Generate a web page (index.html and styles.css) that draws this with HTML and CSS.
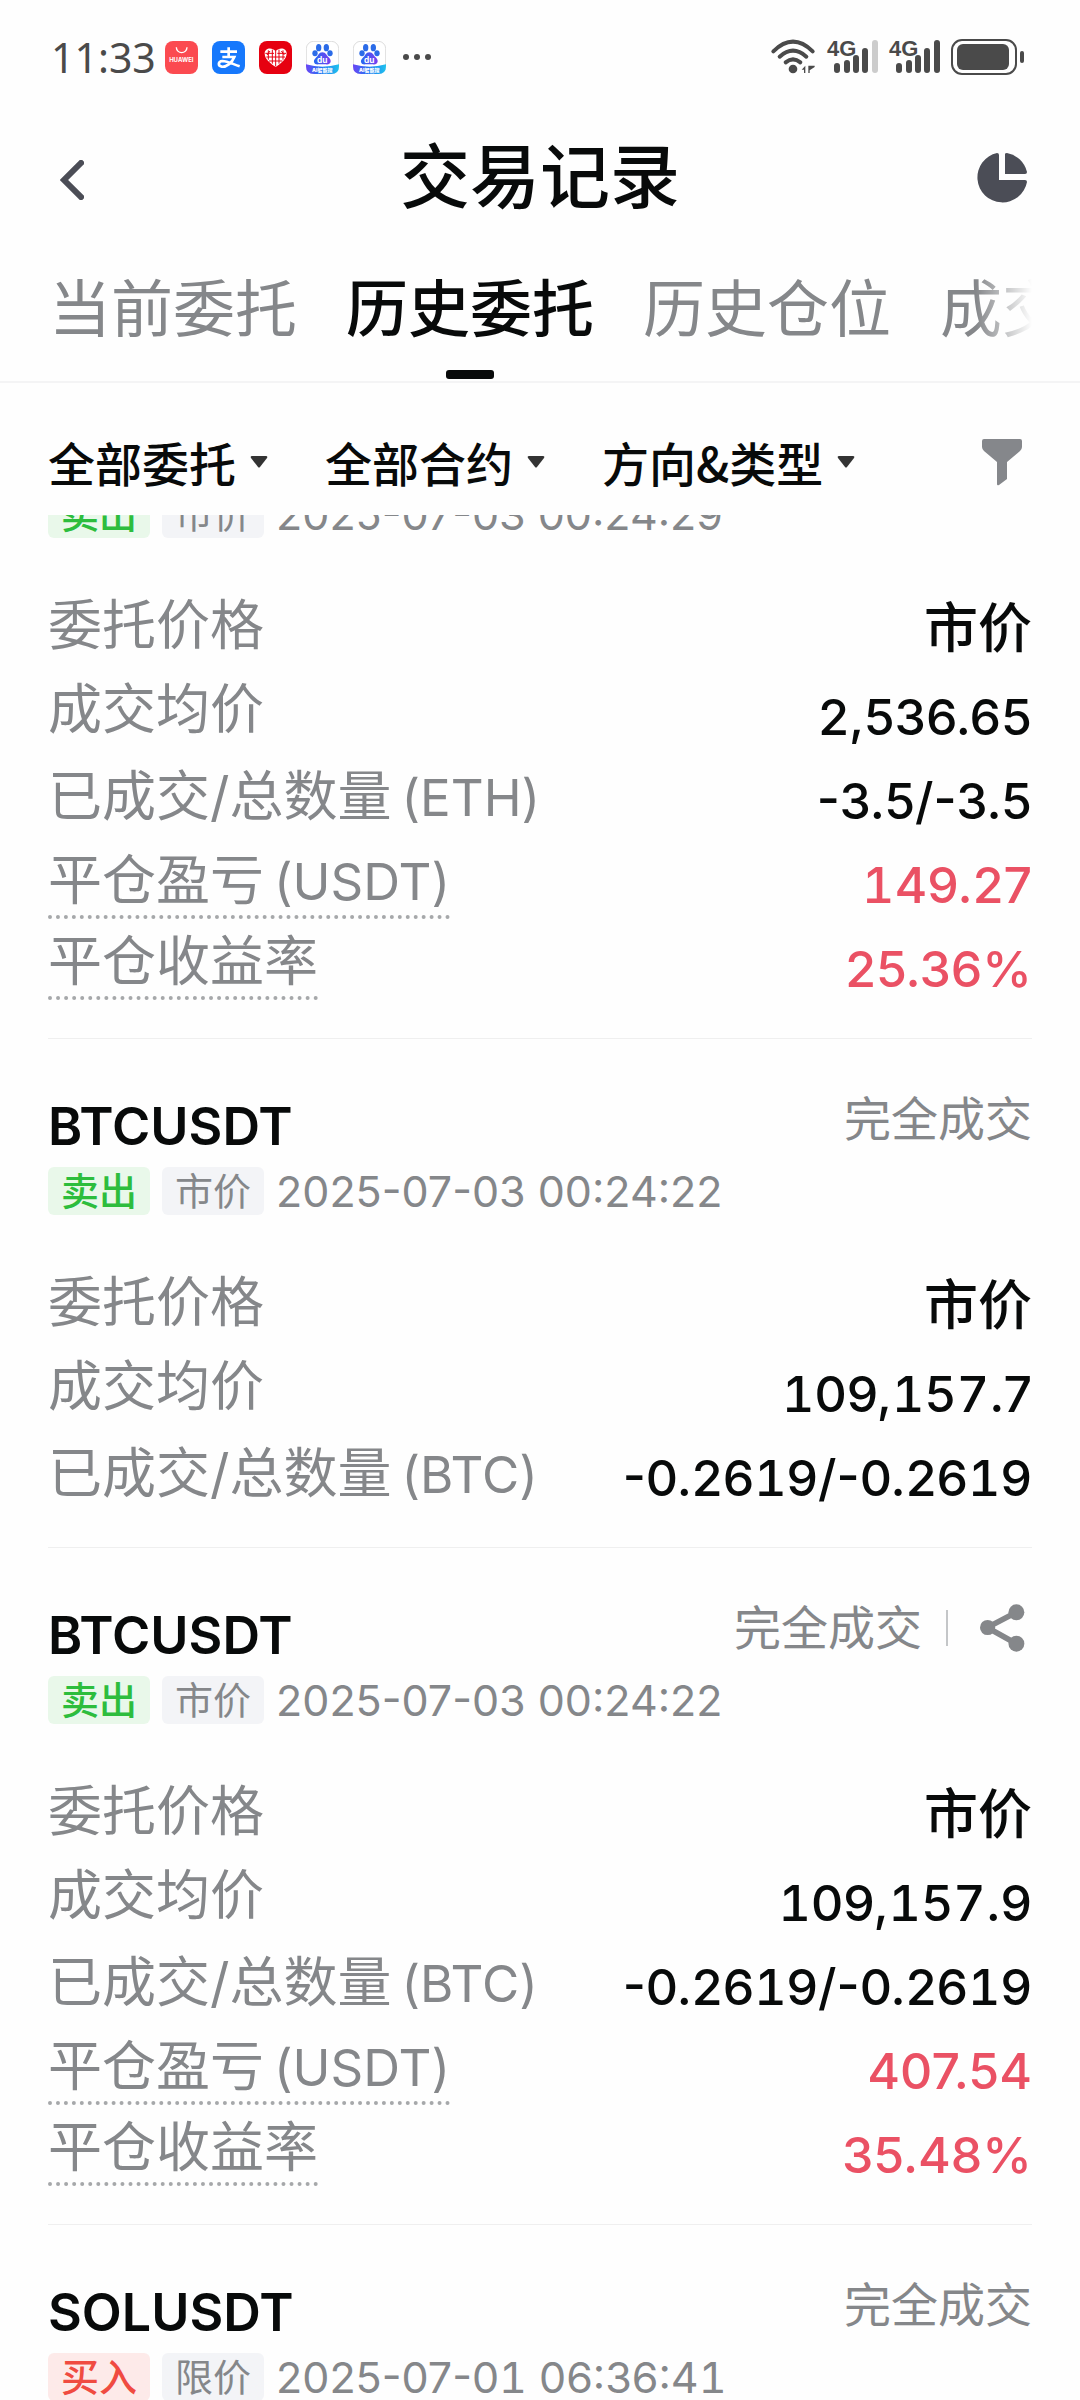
FILE: index.html
```html
<!DOCTYPE html>
<html lang="zh-CN">
<head>
<meta charset="utf-8">
<meta name="viewport" content="width=device-width">
<title>交易记录</title>
<link rel="stylesheet" href="styles.css">
</head>
<body>
<div class="statusbar">
  <span class="clock">11:33</span>
  <div class="apps">
    <svg class="app" viewBox="0 0 99 99"><rect width="99" height="99" rx="24" fill="#fb4a50"/><path d="M34 19a16 16 0 0 0 32 0" fill="none" stroke="#fff" stroke-width="4"/><text x="49" y="64" font-size="18" font-weight="700" text-anchor="middle" fill="#fff">HUAWEI</text></svg>
    <svg class="app" viewBox="0 0 99 99"><rect width="99" height="99" rx="24" fill="#1678fc"/><path d="M25 32H75M50 19V48M31 48H67C60 66 42 79 29 77C17 75 18 61 31 60C48 60 63 70 83 76" fill="none" stroke="#fff" stroke-width="8"/></svg>
    <svg class="app" viewBox="0 0 99 99"><rect width="99" height="99" rx="24" fill="#e60010"/><path d="M50 78C32 66 17 54 17 37C17 22 38 17 50 31C62 17 83 22 83 37C83 54 68 66 50 78Z" fill="#fff"/><path d="M50 30V76M40 26V68M60 26V68M28 28V56M72 28V56M19 37H45M55 37H81M22 48H78M30 60H70M33 30L24 42M67 30L76 42" stroke="#e60010" stroke-width="3" fill="none"/></svg>
    <svg class="app" viewBox="0 0 99 99"><use href="#baidu"/></svg>
    <svg class="app" viewBox="0 0 99 99"><defs><linearGradient id="paw" x1="0" x2="1"><stop offset="0" stop-color="#2468f2"/><stop offset="1" stop-color="#7a3df0"/></linearGradient><linearGradient id="band" x1="0" x2="1"><stop offset="0" stop-color="#6b45f5"/><stop offset=".5" stop-color="#1f7bf2"/><stop offset="1" stop-color="#20c3ee"/></linearGradient></defs>
      <g id="baidu"><rect x="1" y="1" width="97" height="97" rx="22" fill="#fff" stroke="#ccc" stroke-width="2"/><g fill="#2b6be8"><ellipse cx="38" cy="20" rx="8" ry="11"/><ellipse cx="61" cy="20" rx="8" ry="11"/><ellipse cx="27" cy="37" rx="8" ry="9"/><ellipse cx="72" cy="37" rx="8" ry="9"/></g><path d="M49 34C60 34 62 45 70 51C80 62 70 73 60 70H38C26 73 18 61 29 51C37 45 38 34 49 34Z" fill="url(#paw)"/><text x="49" y="66" font-size="25" font-weight="700" text-anchor="middle" fill="#fff">du</text><path d="M0 70Q49 84 99 70V76Q99 99 76 99H24Q0 99 0 76Z" fill="url(#band)"/><text x="49" y="94" font-size="15" font-weight="900" text-anchor="middle" fill="#fff">AI智能搜</text></g></svg>
    <svg class="more" viewBox="0 0 30 8"><g fill="#4a4a4a"><circle cx="4" cy="4" r="3"/><circle cx="15" cy="4" r="3"/><circle cx="26" cy="4" r="3"/></g></svg>
  </div>
  <div class="signals">
    <svg width="45" height="36" viewBox="0 0 135 108"><g fill="none" stroke="#4a4a4a" stroke-width="12" stroke-linecap="round"><path d="M7 37Q66-21 125 37"/><path d="M26 53Q66 17 106 53"/><path d="M44 70Q66 52 88 70"/></g><circle cx="66" cy="90" r="13" fill="#4a4a4a"/><path d="M92 92L103 80V102H99V92ZM112 80V102H116V94L131 84V80Z" fill="#4a4a4a"/></svg>
    <svg width="51" height="36" viewBox="0 0 51 36"><text class="net" x="0" y="17">4G</text><g stroke="#4a4a4a" stroke-width="6" stroke-linecap="round"><path d="M10 27V31M20 24V31M29 19V31M38 12V31"/><path d="M48 4V31" stroke="#ccc"/></g></svg>
    <svg width="51" height="36" viewBox="0 0 51 36"><text class="net" x="0" y="17">4G</text><g stroke="#4a4a4a" stroke-width="6" stroke-linecap="round"><path d="M10 27V31M20 24V31M29 19V31M38 12V31M48 4V31"/></g></svg>
    <svg width="74" height="36" viewBox="0 0 74 36"><rect x="1" y="1" width="64" height="34" rx="10" fill="none" stroke="#4a4a4a" stroke-width="2"/><rect x="6" y="5" width="52" height="26" rx="6" fill="#4a4a4a"/><rect x="69" y="12" width="4" height="12" rx="2" fill="#4a4a4a"/></svg>
  </div>
</div>

<header class="header">
  <button class="icon-btn back" aria-label="返回"><svg width="24" height="40" viewBox="0 0 24 40"><path d="M21 3L4 20L21 37" fill="none" stroke="#4b4d56" stroke-width="6" stroke-linecap="square"/></svg></button>
  <h1 class="title">交易记录</h1>
  <button class="icon-btn" aria-label="统计"><svg width="50" height="50" viewBox="0 0 50 50" fill="#4b4d56"><path d="M20 0Q22 0 22 2V27H48Q50 27 50 29A25 25 0 1 1 20 0Z"/><path d="M28 1Q28 0 30 0A25 25 0 0 1 50 19Q50 21 48 21H28Z"/></svg></button>
</header>

<nav class="tabs">
  <div class="tabs-track">
    <a class="tab" href="#current">当前委托</a>
    <a class="tab active" href="#history" aria-current="page">历史委托</a>
    <a class="tab" href="#positions">历史仓位</a>
    <a class="tab" href="#deals">成交</a>
  </div>
</nav>

<div class="filters">
  <button class="filter">全部委托<svg class="caret" viewBox="0 0 18 12"><path d="M2 0H16Q18 0 17 2L10 11Q9 12 8 11L1 2Q0 0 2 0Z"/></svg></button>
  <button class="filter">全部合约<svg class="caret" viewBox="0 0 18 12"><path d="M2 0H16Q18 0 17 2L10 11Q9 12 8 11L1 2Q0 0 2 0Z"/></svg></button>
  <button class="filter">方向&amp;类型<svg class="caret" viewBox="0 0 18 12"><path d="M2 0H16Q18 0 17 2L10 11Q9 12 8 11L1 2Q0 0 2 0Z"/></svg></button>
  <button class="icon-btn funnel" aria-label="筛选"><svg width="40" height="47" viewBox="0 0 40 47"><path d="M2 0H38Q40 0 40 2V8Q40 10 38 12L25 23V40L17 46Q15 47 15 45V23L2 12Q0 10 0 8V2Q0 0 2 0Z" fill="#85878b"/></svg></button>
</div>

<main class="orders">
  <article class="order scrolled">
    <div class="meta"><span class="tag sell">卖出</span><span class="tag">市价</span><time>2025-07-03 00:24:29</time></div>
    <dl class="rows">
      <div class="row"><dt>委托价格</dt><dd class="cjk">市价</dd></div>
      <div class="row"><dt>成交均价</dt><dd>2,536.65</dd></div>
      <div class="row latin"><dt>已成交/总数量<small>(ETH)</small></dt><dd>-3.5/-3.5</dd></div>
      <div class="row latin"><dt><span class="hint">平仓盈亏<small>(USDT)</small></span></dt><dd class="gain"><span class="tab-num">1</span>49.27</dd></div>
      <div class="row"><dt><span class="hint">平仓收益率</span></dt><dd class="gain">25.36%</dd></div>
    </dl>
  </article>

  <article class="order">
    <div class="head"><h2 class="pair">BTCUSDT</h2><div class="state">完全成交</div></div>
    <div class="meta"><span class="tag sell">卖出</span><span class="tag">市价</span><time>2025-07-03 00:24:22</time></div>
    <dl class="rows">
      <div class="row"><dt>委托价格</dt><dd class="cjk">市价</dd></div>
      <div class="row"><dt>成交均价</dt><dd><span class="tab-num">1</span>09,<span class="tab-num">157</span>.7</dd></div>
      <div class="row latin"><dt>已成交/总数量<small>(BTC)</small></dt><dd>-0.26<span class="tab-num">1</span>9/-0.26<span class="tab-num">1</span>9</dd></div>
    </dl>
  </article>

  <article class="order">
    <div class="head"><h2 class="pair">BTCUSDT</h2><div class="state">完全成交<button class="icon-btn share" aria-label="分享"><svg width="45" height="48" viewBox="0 0 136 143"><path d="M110 24L22 70L110 119" fill="none" stroke="#85878a" stroke-width="17"/><g fill="#85878a"><circle cx="23" cy="70" r="23"/><circle cx="110" cy="24" r="24"/><circle cx="110" cy="119" r="24"/></g></svg></button></div></div>
    <div class="meta"><span class="tag sell">卖出</span><span class="tag">市价</span><time>2025-07-03 00:24:22</time></div>
    <dl class="rows">
      <div class="row"><dt>委托价格</dt><dd class="cjk">市价</dd></div>
      <div class="row"><dt>成交均价</dt><dd><span class="tab-num">1</span>09,<span class="tab-num">157</span>.9</dd></div>
      <div class="row latin"><dt>已成交/总数量<small>(BTC)</small></dt><dd>-0.26<span class="tab-num">1</span>9/-0.26<span class="tab-num">1</span>9</dd></div>
      <div class="row latin"><dt><span class="hint">平仓盈亏<small>(USDT)</small></span></dt><dd class="gain">407.54</dd></div>
      <div class="row"><dt><span class="hint">平仓收益率</span></dt><dd class="gain">35.48%</dd></div>
    </dl>
  </article>

  <article class="order">
    <div class="head"><h2 class="pair">SOLUSDT</h2><div class="state">完全成交</div></div>
    <div class="meta"><span class="tag buy">买入</span><span class="tag">限价</span><time>2025-07-0<span class="tab-num">1</span> 06:36:4<span class="tab-num">1</span></time></div>
  </article>
</main>
</body>
</html>
```
FILE: styles.css
```css
* { box-sizing: border-box; }

body {
  margin: 0;
  height: 100vh;
  overflow: hidden;
  display: flex;
  flex-direction: column;
  background: #fefefe;
  color: #080a0a;
  font-family: Inter, "Noto Sans CJK SC", sans-serif;
}

svg { display: block; flex: none; }
h1, h2, dl, dd { margin: 0; }
button { padding: 0; border: 0; background: none; color: inherit; font: inherit; }
a { color: inherit; text-decoration: none; }

/* System status bar */
.statusbar {
  flex: none;
  display: flex;
  align-items: center;
  height: 114px;
  padding: 0 55px 0 51px;
  color: #4a4a4a;
}
.clock { width: 114px; font: 400 41px/60px "Noto Sans", sans-serif; }
.apps { display: flex; align-items: center; gap: 14px; }
.app { width: 33px; height: 33px; }
.more { width: 30px; height: 8px; margin-left: 2px; }
.signals { display: flex; gap: 11px; margin-left: auto; }
.signals svg { overflow: visible; }
.net { font: 700 22px "Liberation Sans", sans-serif; fill: #4a4a4a; }

/* Page header */
.header {
  flex: none;
  display: flex;
  align-items: center;
  justify-content: space-between;
  height: 128px;
  padding: 0 53px;
}
.icon-btn { flex: none; width: 50px; display: flex; }
.back { padding: 4px 0 0 7px; }
.title { font-size: 70px; line-height: 100px; font-weight: 500; }

/* Tabs */
.tabs { flex: none; padding: 0 48px 0 49px; border-bottom: 2px solid #f4f4f5; }
.tabs-track {
  display: flex;
  gap: 49px;
  overflow: hidden;
  white-space: nowrap;
  -webkit-mask-image: linear-gradient(to left, transparent, #000 56px);
  mask-image: linear-gradient(to left, transparent, #000 56px);
}
.tab {
  position: relative;
  flex: none;
  padding: 32px 0 35px;
  font-size: 62px;
  line-height: 72px;
  color: #85878a;
}
.tab.active { color: #080a0a; font-weight: 500; }
.tab.active::after {
  content: "";
  position: absolute;
  left: 50%;
  bottom: 2px;
  width: 48px;
  height: 9px;
  margin-left: -24px;
  border-radius: 3px;
  background: #080a0a;
}

/* Filters */
.filters {
  flex: none;
  display: flex;
  align-items: center;
  gap: 57px;
  padding: 49px 58px 23px 48px;
}
.filter {
  display: flex;
  align-items: center;
  gap: 14px;
  font-family: "Noto Sans CJK SC", sans-serif;
  font-size: 47px;
  line-height: 60px;
  font-weight: 500;
  white-space: nowrap;
}
.caret { width: 18px; height: 12px; fill: #333; }
.funnel { width: 40px; margin-left: auto; }

/* Order list */
.orders { flex: 1; min-height: 0; overflow: hidden; padding: 0 48px; }
.order { padding: 52px 0 27px; border-bottom: 1px solid #efefef; }
.order.scrolled { margin-top: -25px; padding-top: 0; }
.head { display: flex; justify-content: space-between; align-items: flex-start; margin-bottom: 4px; }
.pair { font-size: 52px; line-height: 72px; font-weight: 600; }
.state { display: flex; align-items: center; font-size: 47px; line-height: 56px; height: 56px; color: #85878a; }
.share {
  width: auto;
  margin-left: 24px;
  padding: 0 7px 0 0;
  align-items: center;
}
.share::before { content: ""; width: 2px; height: 36px; margin-right: 32px; background: #c4c6c8; }

.meta { display: flex; align-items: center; gap: 12px; height: 48px; margin-bottom: 53px; }
.tag {
  padding: 0 13px;
  border-radius: 6px;
  font-size: 38px;
  line-height: 48px;
  background: #f3f4f7;
  color: #85878a;
}
.tag.sell { background: #e9f8ea; color: #2dbd3d; font-weight: 500; }
.tag.buy { background: #fdeae9; color: #f04b41; font-weight: 500; }
.meta time { font-size: 43px; line-height: 48px; color: #85878a; white-space: nowrap; }

.row {
  display: flex;
  justify-content: space-between;
  align-items: center;
  height: 84px;
  white-space: nowrap;
}
dt { padding-bottom: 14px; font-size: 54px; line-height: 72px; color: #85878a; }
.latin dt { padding-bottom: 8px; }
dt small { margin-left: 10px; font-size: 51px; }
.hint { display: block; height: 74px; margin-bottom: -2px; border-bottom: 4px dotted #a6a8aa; }
dd { font-size: 50px; line-height: 60px; font-weight: 500; }
dd.cjk { padding-bottom: 8px; font-size: 54px; }
.gain { color: #ea5164; }
.tab-num { font-feature-settings: "tnum"; }
```
